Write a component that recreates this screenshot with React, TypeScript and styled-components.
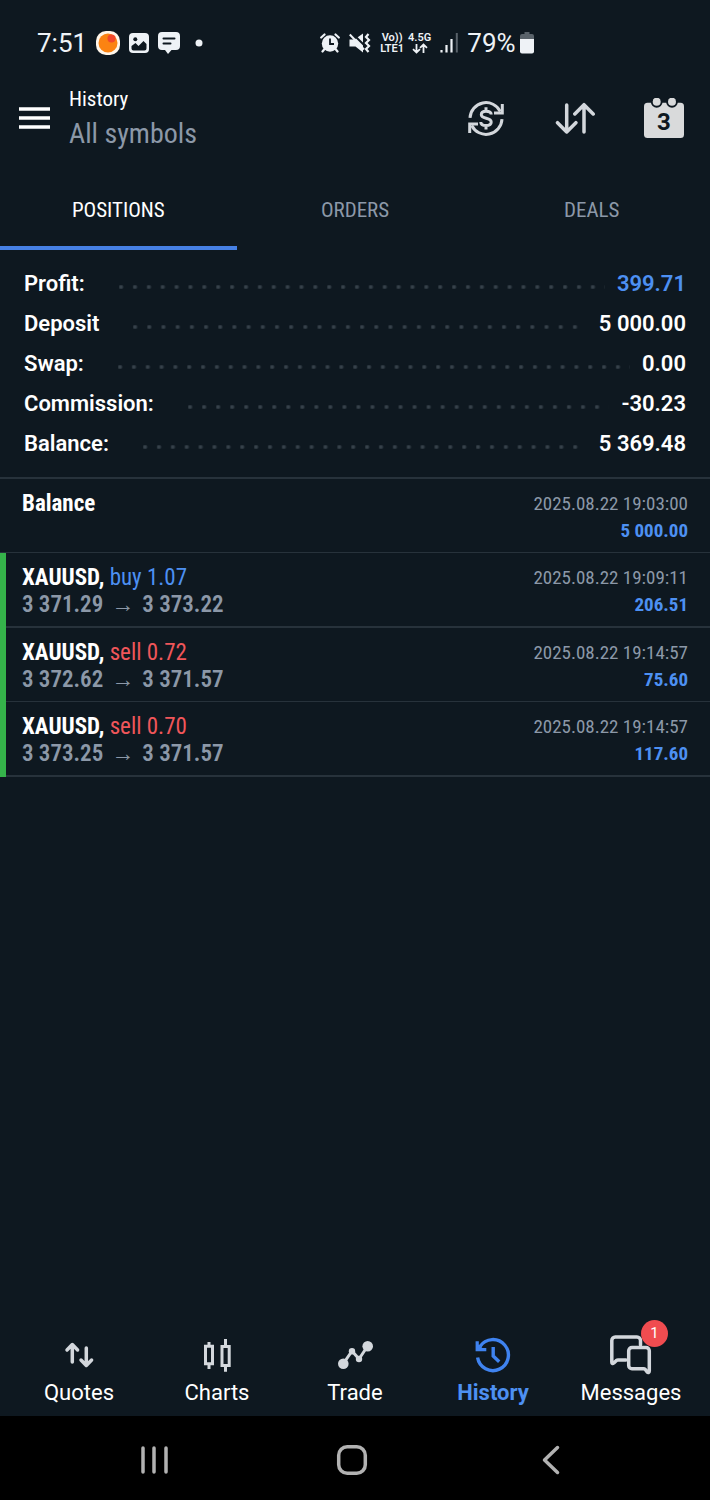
import React from 'react';
import styled, { createGlobalStyle } from 'styled-components';

const color = {
  page: '#0e1820',
  text: '#ffffff',
  muted: '#8c98a8',
  icon: '#d3d7dc',
  blue: '#4d90f2',
  accent: '#4680e4',
  history: '#3f83f0',
  red: '#f0565a',
  green: '#35b34a',
  line: '#27323b',
};

const condensed = "'Roboto Condensed', 'Liberation Sans Narrow', Roboto, sans-serif";

const GlobalStyle = createGlobalStyle`
  *, *::before, *::after { box-sizing: border-box; }
  body { margin: 0; background: ${color.page}; }
  button { font: inherit; color: inherit; background: none; border: 0; padding: 0; cursor: pointer; }
  svg { display: block; flex: none; }
`;

const Screen = styled.div`
  display: flex;
  flex-direction: column;
  min-height: 100vh;
  background: ${color.page};
  color: ${color.text};
  font-family: Roboto, sans-serif;
`;

const StatusBar = styled.div`
  display: flex;
  align-items: center;
  height: 86px;
  padding: 0 37px;
  color: #eef2f6;
`;

const StatusGroup = styled.div`
  display: flex;
  align-items: center;
  gap: 9px;
  & + & { margin-left: 115px; }
`;

const StatusText = styled.span`
  font-size: 26px;
  line-height: 32px;
`;

const StatusPair = styled.span`
  display: flex;
  align-items: center;
  gap: 4px;
`;

const NetworkLabel = styled.span`
  display: flex;
  flex-direction: column;
  align-items: center;
  font-size: 11px;
  font-weight: 600;
  line-height: 11px;
`;

const AppBar = styled.header`
  display: flex;
  align-items: center;
  height: 84px;
  padding: 0 26px 20px 19px;
`;

const MenuButton = styled.button`
  margin-right: 19px;
`;

const Titles = styled.div`
  flex: 1;
  font-family: ${condensed};
`;

const Title = styled.h1`
  margin: 0;
  font-size: 21px;
  font-weight: 400;
  line-height: 32px;
`;

const Subtitle = styled.p`
  margin: 0;
  color: ${color.muted};
  font-size: 28px;
  line-height: 38px;
`;

const Actions = styled.div`
  display: flex;
  gap: 49px;
`;

const Tabs = styled.div`
  display: grid;
  grid-template-columns: repeat(3, 1fr);
  height: 80px;
`;

const Tab = styled.button<{ $active?: boolean }>`
  && {
    padding-top: 3px;
    border-bottom: 4px solid ${(p) => (p.$active ? color.accent : 'transparent')};
    color: ${(p) => (p.$active ? color.text : color.muted)};
    font-family: ${condensed};
    font-size: 21px;
    line-height: 28px;
  }
`;

const Summary = styled.dl`
  margin: 0;
  padding: 14px 24px 13px;
  border-bottom: 2px solid ${color.line};
`;

const SummaryRow = styled.div`
  display: flex;
  align-items: center;
  height: 40px;
  font-size: 22px;
  font-weight: 600;
  line-height: 28px;
`;

const SummaryValue = styled.dd<{ $blue?: boolean }>`
  margin: 0;
  color: ${(p) => (p.$blue ? color.blue : color.text)};
`;

const Leader = styled.span`
  flex: 1;
  height: 4px;
  margin: 5px 12px 0 34px;
  background: radial-gradient(circle at 2px 2px, #36414a 1px, transparent 3px) 0 0 / 14px 4px round;
`;

const History = styled.main`
  flex: 1;
`;

const List = styled.ul`
  margin: 0;
  padding: 0;
  list-style: none;
  font-family: ${condensed};
`;

const Item = styled.li`
  display: flex;
`;

const Strip = styled.span`
  width: 6px;
  background: ${color.green};
`;

const ItemBody = styled.div<{ $inset?: boolean }>`
  display: flex;
  flex: 1;
  justify-content: space-between;
  padding: 11px 22px 8px ${(p) => (p.$inset ? 16 : 22)}px;
  border-bottom: 1px solid ${color.line};
  ${Item}:nth-child(even) & { border-bottom-width: 2px; }
`;

const Line = styled.div`
  font-size: 23px;
  line-height: 27px;
`;

const Name = styled.strong`
  font-weight: 700;
`;

const Side = styled.span<{ $kind: string }>`
  color: ${(p) => (p.$kind === 'buy' ? color.blue : color.red)};
`;

const Prices = styled(Line)`
  display: flex;
  gap: 8px;
  color: ${color.muted};
  font-weight: 600;
`;

const Figures = styled.div`
  text-align: right;
  font-size: 19px;
  line-height: 27px;
`;

const Time = styled.time`
  display: block;
  color: ${color.muted};
`;

const Amount = styled.div`
  color: ${color.blue};
  font-weight: 700;
`;

const BottomNav = styled.nav`
  display: grid;
  grid-template-columns: repeat(5, 1fr);
  height: 100px;
  padding: 0 10px;
`;

const NavItem = styled.button<{ $active?: boolean }>`
  && {
    display: flex;
    flex-direction: column;
    align-items: center;
    padding-top: 17px;
    color: ${(p) => (p.$active ? color.blue : color.text)};
    font-size: 22px;
    font-weight: ${(p) => (p.$active ? 700 : 400)};
    line-height: 32px;
  }
`;

const NavIcon = styled.span<{ $active?: boolean }>`
  position: relative;
  color: ${(p) => (p.$active ? color.history : color.icon)};
`;

const Badge = styled.span`
  position: absolute;
  top: -13px;
  right: -15px;
  width: 27px;
  height: 27px;
  border-radius: 50%;
  background: #f04c50;
  color: ${color.text};
  font-size: 15px;
  font-weight: 400;
  line-height: 27px;
  text-align: center;
`;

const SystemBar = styled.div`
  display: grid;
  grid-template-columns: repeat(3, 1fr);
  height: 84px;
  padding: 4px 60px 0 55px;
  background: #000000;
  color: #b2b2b2;
`;

const SystemButton = styled.button`
  display: grid;
  place-items: center;
`;

const stroke = {
  fill: 'none',
  stroke: 'currentColor',
  strokeWidth: 3.5,
  strokeLinecap: 'round' as const,
  strokeLinejoin: 'round' as const,
};

const AppDot = () => (
  <svg width="24" height="24" viewBox="0 0 24 24">
    <rect width="24" height="24" rx="10" fill="#fff6ea" />
    <circle cx="12" cy="12" r="9.5" fill="#fb8312" />
    <circle cx="15.5" cy="7.5" r="4" fill="#f2482c" />
  </svg>
);

const PictureIcon = () => (
  <svg width="20" height="20" viewBox="0 0 20 20">
    <rect width="20" height="20" rx="4" fill="currentColor" />
    <circle cx="6.3" cy="6.3" r="2" fill={color.page} />
    <path d="M2.5 15.5V13l4-3 3 3 5-5 3 3v4.5a2 2 0 0 1-2 2h-11a2 2 0 0 1-2-2z" fill={color.page} />
  </svg>
);

const ChatIcon = () => (
  <svg width="22" height="22" viewBox="0 0 22 22">
    <path d="M4 0h14a4 4 0 0 1 4 4v10a4 4 0 0 1-4 4h-4.500l-3.500 4-3-4H4a4 4 0 0 1-4-4V4a4 4 0 0 1 4-4z" fill="currentColor" />
    <path d="M5.500 6.500h11M5.500 11.500h7" stroke={color.page} strokeWidth="2" strokeLinecap="round" />
  </svg>
);

const DotIcon = () => (
  <svg width="16" height="8" viewBox="0 0 16 8">
    <circle cx="10" cy="4" r="3.500" fill="currentColor" />
  </svg>
);

const AlarmIcon = () => (
  <svg width="20" height="20" viewBox="0 0 20 20">
    <circle cx="10" cy="10.500" r="8.200" fill="currentColor" />
    <path d="M1.200 4.500 4.500 1.500M18.800 4.500 15.500 1.500M4.500 16 2.500 18.500M15.500 16l2 2.500" stroke="currentColor" strokeWidth="2.200" strokeLinecap="round" />
    <path d="M10 5.500v5.500h4" fill="none" stroke={color.page} strokeWidth="1.800" />
  </svg>
);

const MuteIcon = () => (
  <svg width="22" height="20" viewBox="0 0 22 20">
    <path d="M.500 6.500h5L14 .5v19L6.500 13.500h-6z" fill="currentColor" />
    <path d="M3 0 16 13" stroke={color.page} strokeWidth="2" />
    <path d="M.800 1.500 15 16.500" stroke="currentColor" strokeWidth="2" />
    <path d="M19.500 1l-2.500 3 3 3-3 3 3 3-3 3 2.500 3" fill="none" stroke="currentColor" strokeWidth="2.200" />
  </svg>
);

const DataArrows = () => (
  <svg width="16" height="11" viewBox="0 0 16 11">
    <path d="M4.500 1v8.500M1 6.200l3.500 3.300L8 6.200M11.500 10V1.500M8 4.800l3.500-3.300L15 4.800" fill="none" stroke="currentColor" strokeWidth="1.800" />
  </svg>
);

const SignalIcon = () => (
  <svg width="18" height="20" viewBox="0 0 18 20">
    <path d="M1.500 17v2.500M6.500 12v7.500M11.500 6v13.500" stroke="currentColor" strokeWidth="2.200" />
    <path d="M16.800 0v19.500" stroke="#59626a" strokeWidth="2" />
  </svg>
);

const BatteryIcon = () => (
  <svg width="14" height="22" viewBox="0 0 14 22">
    <path d="M4.500 0h5v2H12a2 2 0 0 1 2 2v3H0V4a2 2 0 0 1 2-2h2.500z" fill="#59626a" />
    <path d="M0 7h14v12.500a2 2 0 0 1-2 2H2a2 2 0 0 1-2-2z" fill="currentColor" />
  </svg>
);

const MenuIcon = () => (
  <svg width="31" height="22" viewBox="0 0 31 22">
    <path d="M0 2h31M0 11h31M0 20h31" stroke="currentColor" strokeWidth="3.400" />
  </svg>
);

const CurrencyIcon = () => (
  <svg width="40" height="40" viewBox="0 0 40 40" color={color.icon}>
    <g fill="none" stroke="currentColor" strokeWidth="3">
      <path d="M4 19.800A16 16 0 0 1 34.300 13.500" />
      <path d="M36.300 6v9H28" />
      <path d="M36 21.200A16 16 0 0 1 5.700 27.500" />
      <path d="M3.700 35v-9H12" />
      <path d="M20 9.300v4M20 27.500v4M25.200 16.500c0-2-2-3.300-5.200-3.300s-4.700 1.500-4.700 3.500c0 4.600 9.900 2.400 9.900 7.200 0 2.200-2 3.600-5.200 3.600s-5.200-1.500-5.200-3.600" />
    </g>
  </svg>
);

const SortIcon = () => (
  <svg width="40" height="40" viewBox="0 0 40 40" color={color.icon}>
    <path {...stroke} d="M11.700 7v27M2.500 24.700l9.200 9.300 9.200-9.300M29 34V7M19.800 16l9.200-9.300 9.200 9.300" />
  </svg>
);

const CalendarIcon = () => (
  <svg width="40" height="40" viewBox="0 0 40 40" color="#d9dadb">
    <rect y="4.700" width="40" height="35.300" rx="3.500" fill="currentColor" />
    <circle cx="12.700" cy="4" r="5.800" fill={color.page} />
    <circle cx="28" cy="4" r="5.800" fill={color.page} />
    <circle cx="12.700" cy="3.700" r="4" fill="currentColor" />
    <circle cx="28" cy="3.700" r="4" fill="currentColor" />
    <text x="20" y="32" textAnchor="middle" fontFamily="Roboto, sans-serif" fontSize="24" fontWeight="700" fill={color.page}>3</text>
  </svg>
);

const QuotesIcon = () => (
  <svg width="44" height="44" viewBox="0 0 44 44">
    <path {...stroke} d="M15.300 29V12M10 17l5.300-5.500 5.300 5.500M29.300 15v17M24 27l5.300 5.500 5.300-5.500" />
  </svg>
);

const ChartsIcon = () => (
  <svg width="44" height="44" viewBox="0 0 44 44">
    <g fill="none" stroke="currentColor" strokeWidth="3">
      <path d="M10.500 13.200h7v17.500h-7zM14 9v4M14 31v5" />
      <path d="M27 13.500h7.200v19H27zM30.500 6v7M30.500 33v5.700" />
    </g>
  </svg>
);

const TradeIcon = () => (
  <svg width="44" height="44" viewBox="0 0 44 44">
    <path {...stroke} strokeWidth="3" d="M10.300 30.700 19 18l7 8 8.700-13" />
    <g fill="currentColor">
      <circle cx="10.300" cy="30.700" r="5.300" />
      <circle cx="19" cy="18.300" r="3.200" />
      <circle cx="26" cy="26" r="3.200" />
      <circle cx="34.700" cy="13.300" r="5.300" />
    </g>
  </svg>
);

const HistoryIcon = () => (
  <svg width="44" height="44" viewBox="0 0 44 44">
    <g fill="none" stroke="currentColor" strokeWidth="3.400">
      <path d="M6.600 24.500A15.500 15.500 0 1 0 9 13.500" />
      <path d="M22.200 14v9l6 5.700" />
    </g>
    <path d="M4.600 8.300h3.200v3.500l3.500 3.200h4v3.300H4.600z" fill="currentColor" />
  </svg>
);

const MessagesIcon = () => (
  <svg width="44" height="44" viewBox="0 0 44 44">
    <path {...stroke} d="M31.500 12V7.500a3.500 3.500 0 0 0-3.500-3.500H6.300a3.500 3.500 0 0 0-3.500 3.500V29c0 1.600.8 2 2 1l2.400-2.300c.6-.5 1-.7 1.800-.7h8" />
    <path {...stroke} d="M23 14.500h14a3.300 3.300 0 0 1 3.300 3.300V38c0 1.700-1.200 2-2.300.8L36.300 36.500c-.5-.5-1-.7-1.800-.7H23a3.300 3.300 0 0 1-3.300-3.300V17.800a3.300 3.300 0 0 1 3.300-3.300z" />
  </svg>
);

const RecentsIcon = () => (
  <svg width="32" height="32" viewBox="0 0 32 32">
    <path {...stroke} d="M5 4v24M16 4v24M28 4v24" />
  </svg>
);

const HomeIcon = () => (
  <svg width="32" height="32" viewBox="0 0 32 32">
    <rect {...stroke} x="2.700" y="2.700" width="26.600" height="26.600" rx="8.500" />
  </svg>
);

const BackIcon = () => (
  <svg width="32" height="32" viewBox="0 0 32 32">
    <path {...stroke} d="M22.500 3.500 9.500 16l13 12.500" />
  </svg>
);

const summary = [
  { label: 'Profit:', value: '399.71', blue: true },
  { label: 'Deposit', value: '5 000.00' },
  { label: 'Swap:', value: '0.00' },
  { label: 'Commission:', value: '-30.23' },
  { label: 'Balance:', value: '5 369.48' },
];

const positions = [
  { side: 'buy', volume: '1.07', open: '3 371.29', close: '3 373.22', time: '2025.08.22 19:09:11', profit: '206.51' },
  { side: 'sell', volume: '0.72', open: '3 372.62', close: '3 371.57', time: '2025.08.22 19:14:57', profit: '75.60' },
  { side: 'sell', volume: '0.70', open: '3 373.25', close: '3 371.57', time: '2025.08.22 19:14:57', profit: '117.60' },
];

const navItems = [
  { label: 'Quotes', Icon: QuotesIcon },
  { label: 'Charts', Icon: ChartsIcon },
  { label: 'Trade', Icon: TradeIcon },
  { label: 'History', Icon: HistoryIcon, active: true },
  { label: 'Messages', Icon: MessagesIcon, badge: 1 },
];

export default function App() {
  return (
    <Screen>
      <GlobalStyle />
      <StatusBar>
        <StatusGroup>
          <StatusText>7:51</StatusText>
          <AppDot />
          <PictureIcon />
          <ChatIcon />
          <DotIcon />
        </StatusGroup>
        <StatusGroup>
          <AlarmIcon />
          <MuteIcon />
          <StatusPair>
            <NetworkLabel>
              <span>Vo))</span>
              <span>LTE1</span>
            </NetworkLabel>
            <NetworkLabel>
              <span>4.5G</span>
              <DataArrows />
            </NetworkLabel>
          </StatusPair>
          <SignalIcon />
          <StatusPair>
            <StatusText>79%</StatusText>
            <BatteryIcon />
          </StatusPair>
        </StatusGroup>
      </StatusBar>

      <AppBar>
        <MenuButton aria-label="Menu"><MenuIcon /></MenuButton>
        <Titles>
          <Title>History</Title>
          <Subtitle>All symbols</Subtitle>
        </Titles>
        <Actions>
          <button aria-label="Currency"><CurrencyIcon /></button>
          <button aria-label="Sort"><SortIcon /></button>
          <button aria-label="Period"><CalendarIcon /></button>
        </Actions>
      </AppBar>

      <Tabs role="tablist">
        <Tab role="tab" aria-selected $active>POSITIONS</Tab>
        <Tab role="tab" aria-selected={false}>ORDERS</Tab>
        <Tab role="tab" aria-selected={false}>DEALS</Tab>
      </Tabs>

      <History>
        <Summary>
          {summary.map((row) => (
            <SummaryRow key={row.label}>
              <dt>{row.label}</dt>
              <Leader />
              <SummaryValue $blue={row.blue}>{row.value}</SummaryValue>
            </SummaryRow>
          ))}
        </Summary>
        <List>
          <Item>
            <ItemBody>
              <Line><Name>Balance</Name></Line>
              <Figures>
                <Time>2025.08.22 19:03:00</Time>
                <Amount>5 000.00</Amount>
              </Figures>
            </ItemBody>
          </Item>
          {positions.map((p) => (
            <Item key={p.open}>
              <Strip />
              <ItemBody $inset>
                <div>
                  <Line>
                    <Name>XAUUSD,</Name> <Side $kind={p.side}>{p.side} {p.volume}</Side>
                  </Line>
                  <Prices>
                    <span>{p.open}</span>
                    <span>→</span>
                    <span>{p.close}</span>
                  </Prices>
                </div>
                <Figures>
                  <Time>{p.time}</Time>
                  <Amount>{p.profit}</Amount>
                </Figures>
              </ItemBody>
            </Item>
          ))}
        </List>
      </History>

      <BottomNav>
        {navItems.map(({ label, Icon, active, badge }) => (
          <NavItem key={label} $active={active}>
            <NavIcon $active={active}>
              <Icon />
              {badge && <Badge>{badge}</Badge>}
            </NavIcon>
            {label}
          </NavItem>
        ))}
      </BottomNav>

      <SystemBar>
        <SystemButton aria-label="Recent apps"><RecentsIcon /></SystemButton>
        <SystemButton aria-label="Home"><HomeIcon /></SystemButton>
        <SystemButton aria-label="Back"><BackIcon /></SystemButton>
      </SystemBar>
    </Screen>
  );
}
